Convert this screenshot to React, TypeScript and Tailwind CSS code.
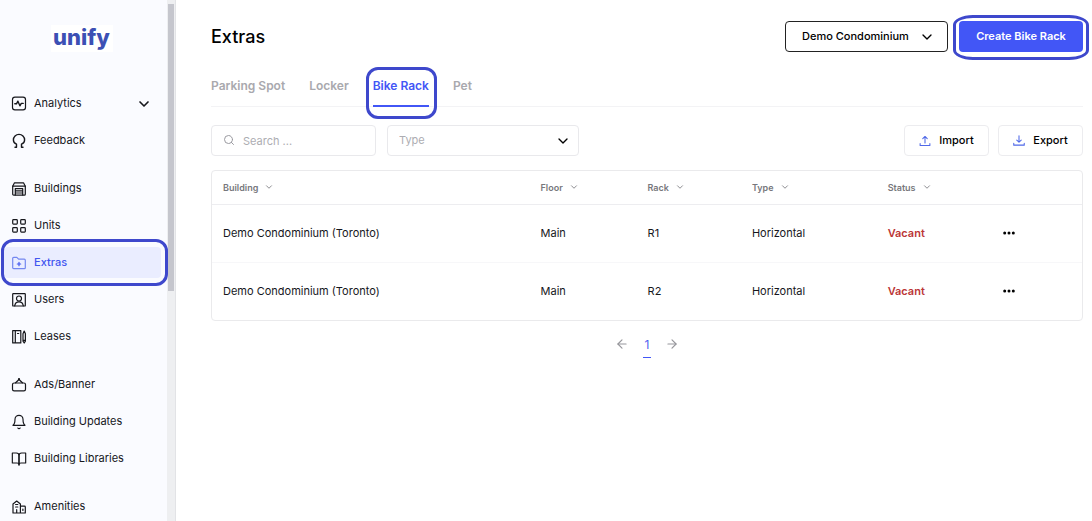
import type { ReactNode } from "react";
import clsx from "clsx";
import { FiArrowLeft, FiArrowRight, FiBell, FiBookOpen, FiChevronDown, FiSearch } from "react-icons/fi";

function Icon({ children, className }: { children: ReactNode; className?: string }) {
  return (
    <svg
      viewBox="0 0 16 16"
      className={clsx("size-4 shrink-0", className)}
      fill="none"
      stroke="currentColor"
      strokeWidth="1.2"
      strokeLinecap="round"
      strokeLinejoin="round"
      aria-hidden="true"
    >
      {children}
    </svg>
  );
}

const navGroups = [
  [
    {
      label: "Analytics",
      expandable: true,
      icon: (
        <Icon>
          <rect x="1.5" y="1.2" width="13" height="12.6" rx="2.4" />
          <path d="M3.8 7.800h1.700l1.400-2.600 2 4.600 1.400-2.400h1.900" strokeWidth="1.400" />
        </Icon>
      ),
    },
    {
      label: "Feedback",
      icon: (
        <Icon>
          <path d="M4 14.200h1.500v-3C3.500 10.400 2.400 8.900 2.400 7a5.600 5.600 0 0 1 11.200 0c0 1.900-1.100 3.400-3.100 4.200v3H12" strokeWidth="1.400" />
        </Icon>
      ),
    },
  ],
  [
    {
      label: "Buildings",
      icon: (
        <Icon>
          <path d="M3.500 1.800h9l1.800 3.400v8a1 1 0 0 1-1 1H2.700a1 1 0 0 1-1-1v-8z" />
          <path d="M1.700 5.200h12.600M4.300 14V7.700h7.400V14M4.500 9.800h7M4.500 12h7" />
        </Icon>
      ),
    },
    {
      label: "Units",
      icon: (
        <Icon>
          <rect x="1.700" y="1.700" width="4.600" height="4.400" rx="0.800" />
          <rect x="9.700" y="1.700" width="4.600" height="4.400" rx="0.800" />
          <rect x="1.700" y="9.700" width="4.600" height="4.400" rx="0.800" />
          <rect x="9.700" y="9.700" width="4.600" height="4.400" rx="0.800" />
        </Icon>
      ),
    },
    {
      label: "Extras",
      active: true,
      icon: (
        <Icon className="text-[#7487f0]">
          <path d="M1.700 12.700V3.300a1 1 0 0 1 1-1h3.100l1.800 1.900h5.700a1 1 0 0 1 1 1v7.500a1 1 0 0 1-1 1H2.700a1 1 0 0 1-1-1z" />
          <path d="M8 7.300v3.400M6.300 9h3.400" stroke="#4256f0" />
        </Icon>
      ),
    },
    {
      label: "Users",
      icon: (
        <Icon>
          <rect x="1.700" y="1.700" width="12.600" height="12.300" rx="0.600" />
          <circle cx="8" cy="6.500" r="2.500" />
          <path d="M3.700 13.800c.4-2.600 2-3.900 4.300-3.900s3.900 1.300 4.300 3.900" />
        </Icon>
      ),
    },
    {
      label: "Leases",
      icon: (
        <Icon>
          <path d="M1.700 1.700h8.100v12.200H1.700zM4.300 1.700v12.200M6.500 4.500h1.200M12 4.800l1.200-2.800 1.200 2.800v7.300L13.200 14 12 12.100zM12 11.300h2.400" />
        </Icon>
      ),
    },
  ],
  [
    {
      label: "Ads/Banner",
      icon: (
        <Icon>
          <rect x="1.500" y="6" width="13" height="7.800" rx="1.600" />
          <path d="M4.600 5.800 8 2.500 11.400 5.800" />
          <circle cx="8" cy="2.200" r="0.500" />
        </Icon>
      ),
    },
    { label: "Building Updates", icon: <FiBell className="size-4 shrink-0" strokeWidth={1.75} /> },
    { label: "Building Libraries", icon: <FiBookOpen className="size-4 shrink-0" strokeWidth={1.75} /> },
  ],
  [
    {
      label: "Amenities",
      icon: (
        <Icon>
          <path d="M2 14V5l3.700-3 3.700 3v9zM9.400 7.200h4.100a.8.800 0 0 1 .8.800v6H9.400M4.600 5.500h2.200M4.600 8h2.200M5.700 14v-3.300M11.900 10v1.500" />
        </Icon>
      ),
    },
  ],
];

const tabs = ["Parking Spot", "Locker", "Bike Rack", "Pet"];

const columns = [
  { label: "Building", width: "w-[36.5%]" },
  { label: "Floor", width: "w-[12.3%]" },
  { label: "Rack", width: "w-[12%]" },
  { label: "Type", width: "w-[15.6%]" },
  { label: "Status", width: "w-[13.3%]" },
];

const racks = [
  { building: "Demo Condominium (Toronto)", floor: "Main", rack: "R1", type: "Horizontal", status: "Vacant" },
  { building: "Demo Condominium (Toronto)", floor: "Main", rack: "R2", type: "Horizontal", status: "Vacant" },
];

function Sidebar() {
  return (
    <aside className="flex h-screen w-44 shrink-0 overflow-hidden border-r border-[#e2e3e6] bg-[#fafbff]">
      <div className="min-w-0 flex-1">
        <div className="flex h-[88px] justify-center pr-1 pt-[25px]">
          <div className="flex h-[27px] w-[62px] items-center justify-center bg-white pb-1 text-[22px] font-extrabold leading-none text-[#3c50b4]">
            unify
          </div>
        </div>
        <nav className="flex flex-col gap-[17px]">
          {navGroups.map((group) => (
            <ul key={group[0].label} className="flex flex-col gap-1.5">
              {group.map((item) => (
                <NavItem key={item.label} {...item} />
              ))}
            </ul>
          ))}
        </nav>
      </div>
      <div className="w-2 shrink-0 bg-[#eeeff1] px-px pt-1">
        <div className="h-[55.5%] bg-[#c5c6cd]" />
      </div>
    </aside>
  );
}

type NavItemProps = { label: string; icon: ReactNode; active?: boolean; expandable?: boolean };

function NavItem({ label, icon, active, expandable }: NavItemProps) {
  return (
    <li className="relative pl-1 pr-1.5">
      <a
        href="#"
        className={clsx(
          "flex h-[31px] items-center gap-[7px] rounded-sm px-[7px] text-[11px]",
          active ? "bg-[#eaedff] font-medium text-[#4256f0]" : "text-[#16171c]"
        )}
      >
        {icon}
        <span className="flex-1 whitespace-nowrap">{label}</span>
        {expandable && <FiChevronDown className="mr-0.5 size-4" strokeWidth={2.5} />}
      </a>
      {active && <Ring className="-bottom-2 -right-px -top-2 left-px rounded-xl" />}
    </li>
  );
}

function Ring({ className }: { className: string }) {
  return <span className={clsx("pointer-events-none absolute z-10 border-3 border-[#3e48cc]", className)} />;
}

function Header() {
  return (
    <header className="flex items-center">
      <h1 className="flex-1 text-lg font-medium leading-none text-black">Extras</h1>
      <div className="relative mr-[11px]">
        <select
          aria-label="Condominium"
          className="h-[31px] w-[163px] appearance-none rounded border border-[#222] bg-white pl-4 text-[11px] font-medium text-black"
        >
          <option>Demo Condominium</option>
        </select>
        <FiChevronDown className="pointer-events-none absolute right-[13px] top-2 size-4" />
      </div>
      <div className="relative">
        <button className="h-[31px] w-[124px] rounded bg-[#4256f6] text-[11px] font-semibold text-white">
          Create Bike Rack
        </button>
        <Ring className="-bottom-2 -left-1.5 -right-1.5 -top-1.5 rounded-[20px/10px]" />
      </div>
    </header>
  );
}

function Tabs() {
  return (
    <div role="tablist" className="mt-5 flex gap-6 border-b border-[#f3f3f5] text-xs">
      {tabs.map((tab) => {
        const active = tab === "Bike Rack";
        return (
          <div key={tab} className="relative -mb-px">
            <button
              role="tab"
              aria-selected={active}
              className={clsx(
                "h-[35px] border-b-2 pb-1.5 font-semibold",
                active ? "border-[#4256f6] text-[#4256f6]" : "border-transparent text-[#a9a9ae]"
              )}
            >
              {tab}
            </button>
            {active && <Ring className="-bottom-3 -left-[7px] -right-2 -top-[5px] rounded-xl" />}
          </div>
        );
      })}
    </div>
  );
}

function Toolbar() {
  return (
    <div className="mt-[18px] flex items-center text-[11px]">
      <div className="relative">
        <FiSearch className="absolute left-3 top-[9px] size-3 text-[#9a9aa0]" />
        <input
          type="text"
          aria-label="Search"
          placeholder="Search ..."
          className="h-[31px] w-[165px] rounded border border-[#e9e9ec] bg-white pl-[31px] placeholder:text-[#adadb2]"
        />
      </div>
      <div className="relative ml-[11px]">
        <select
          aria-label="Type"
          className="h-[31px] w-48 appearance-none rounded border border-[#e9e9ec] bg-white pl-[11px] text-[#adadb2]"
        >
          <option>Type</option>
        </select>
        <FiChevronDown className="pointer-events-none absolute right-2 top-2 size-4 text-black" />
      </div>
      <div className="ml-auto flex gap-[9px]">
        <ActionButton label="Import">
          <path d="M8 10.500V2M5 4.800 8 2l3 2.800M1.500 11.500V14h13v-2.500" />
        </ActionButton>
        <ActionButton label="Export">
          <path d="M8 1V9.500M5 6.700 8 9.500l3-2.800M1 11v2.500h14V11" />
        </ActionButton>
      </div>
    </div>
  );
}

function ActionButton({ label, children }: { label: string; children: ReactNode }) {
  return (
    <button className="flex h-[31px] w-[85px] items-center justify-center gap-2 rounded border border-[#ececef] bg-white font-medium text-black">
      <svg
        viewBox="0 0 16 16"
        className="size-3 text-[#4f68e8]"
        fill="none"
        stroke="currentColor"
        strokeWidth="1.4"
        strokeLinecap="round"
        strokeLinejoin="round"
        aria-hidden="true"
      >
        {children}
      </svg>
      {label}
    </button>
  );
}

function RackTable() {
  return (
    <div className="mt-3.5 rounded border border-[#eaeaec]">
      <table className="w-full table-fixed text-left text-[11px] text-[#16171c]">
        <thead>
          <tr className="h-[33px] border-b border-[#ededf0] text-[9px] text-[#77777c]">
            {columns.map((column) => (
              <th key={column.label} className={clsx("px-[11px] font-semibold", column.width)}>
                <span className="flex items-center gap-1.5">
                  {column.label}
                  <FiChevronDown className="size-2.5" />
                </span>
              </th>
            ))}
            <th aria-label="Actions" />
          </tr>
        </thead>
        <tbody>
          {racks.map((row) => (
            <tr key={row.rack} className="h-[58px] border-b border-[#f7f7f9] last:border-0">
              <td className="px-[11px]">{row.building}</td>
              <td className="px-[11px]">{row.floor}</td>
              <td className="px-[11px]">{row.rack}</td>
              <td className="px-[11px]">{row.type}</td>
              <td className="px-[11px] font-semibold text-[#bb3636]">{row.status}</td>
              <td className="px-[11px]">
                <button aria-label={`Options for ${row.rack}`} className="flex items-center">
                  <svg viewBox="0 0 12 4" className="h-1 w-3" fill="black" aria-hidden="true">
                    <circle cx="1.700" cy="2" r="1.500" />
                    <circle cx="6" cy="2" r="1.500" />
                    <circle cx="10.300" cy="2" r="1.500" />
                  </svg>
                </button>
              </td>
            </tr>
          ))}
        </tbody>
      </table>
    </div>
  );
}

function Pagination() {
  return (
    <nav aria-label="Pagination" className="mt-4 flex items-start justify-center gap-3.5 text-[#96969b]">
      <button aria-label="Previous page">
        <FiArrowLeft className="size-3.5" />
      </button>
      <button className="border-b border-[#4256f6] px-0.5 pb-1 text-xs text-[#4f5ff0]">1</button>
      <button aria-label="Next page">
        <FiArrowRight className="size-3.5" />
      </button>
    </nav>
  );
}

export default function App() {
  return (
    <div className="flex h-screen overflow-hidden bg-white font-['Inter',sans-serif]">
      <Sidebar />
      <main className="min-w-0 flex-1 pl-[35px] pr-[9px] pt-[21px]">
        <Header />
        <Tabs />
        <Toolbar />
        <RackTable />
        <Pagination />
      </main>
    </div>
  );
}
